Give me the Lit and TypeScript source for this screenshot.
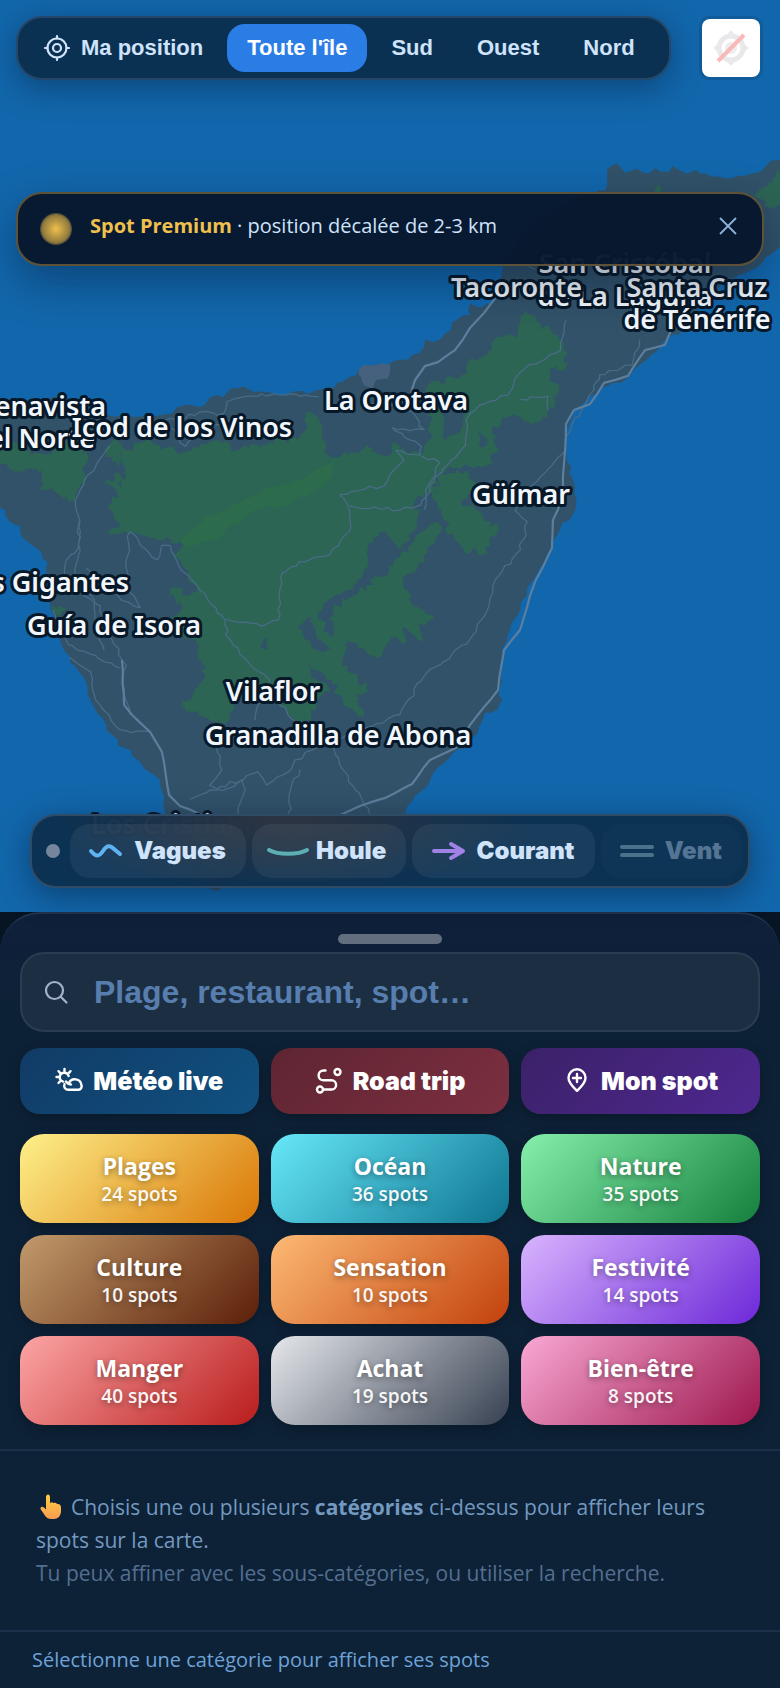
import { LitElement, html, svg, css } from "lit";
import { customElement, state } from "lit/decorators.js";
import { classMap } from "lit/directives/class-map.js";

type Pt = [number, number];

/** Turns "x,y x,y" into points. */
const pts = (s: string): Pt[] =>
  s.trim().split(/\s+/).map((p) => p.split(",").map(Number) as Pt);

/** Roughens a polyline with repeatable noise, so coasts and roads look natural. */
function rough(source: string, step: number, amount: number, closed: boolean): string {
  const p = pts(source);
  let seed = p.length * 7919 + 13;
  const rnd = () => {
    seed = (seed * 1103515245 + 12345) % 2147483648;
    return seed / 2147483648 - 0.5;
  };
  const out: string[] = [];
  const n = closed ? p.length : p.length - 1;
  for (let i = 0; i < n; i++) {
    const a = p[i];
    const b = p[(i + 1) % p.length];
    const len = Math.hypot(b[0] - a[0], b[1] - a[1]);
    const k = Math.max(1, Math.round(len / step));
    for (let j = 0; j < k; j++) {
      const t = j / k;
      const w = j === 0 ? 0.3 : 1;
      out.push(
        `${(a[0] + (b[0] - a[0]) * t + rnd() * amount * w).toFixed(1)} ${(a[1] + (b[1] - a[1]) * t + rnd() * amount * w).toFixed(1)}`
      );
    }
  }
  if (!closed) out.push(p[p.length - 1].join(" "));
  return `M${out.join("L")}${closed ? "Z" : ""}`;
}

const LAND = `800,150 780,160 766,166 761,172 751,173 729,178 711,177 701,173 682,171 673,165 669,172 656,168 649,174 637,169 624,172
 617,163 607,169 605,190 560,205 525,230 502,262 500,280 492,303 482,308 470,304 470,315 453,322 450,330 440,340 425,340 420,353 408,360
 388,364 371,366 358,370 356,375 338,383 321,390 308,394 294,392 279,395 254,392 244,387 236,389 231,388 224,397 209,397 206,405
 189,405 177,407 172,413 149,415 114,417 85,408 60,397 20,402 -20,410 -20,480 0,507 10,522 20,526 22,537 35,548 47,562 46,572
 52,580 50,603 60,640 70,657 75,667 87,687 97,713 107,730 124,748 139,762 159,780 164,797 164,830 180,860 202,880 208,888 218,891 228,886 240,872
 290,862 340,850 380,830 405,813 413,800 423,790 430,780 438,767 455,752 466,748 478,733 485,712 498,710 503,700 498,695 502,682 500,667 502,650
 507,640 510,628 520,610 527,588 537,573 547,555 562,523 575,510 575,493 570,473 566,440 572,417 580,407 597,393 607,387
 622,383 647,360 667,340 687,325 706,300 726,283 756,268 766,257 780,247 800,240`;

const FORESTS = [
  `107,445 119,442 130,450 145,440 160,450 189,450 219,440 239,450 270,442 299,440 311,412 318,417 323,433 331,457 358,452 388,442 405,450 423,453
 430,440 428,427 433,417 425,390 433,382 458,380 470,360 483,357 493,340 517,337 520,322 527,310 542,323 557,337 567,353 567,367 550,370 557,393
 547,417 532,423 512,415 493,427 498,450 488,465 458,467 438,473 433,493 415,500 418,517 413,533 403,552 383,532 373,537 368,560 358,583
 328,600 318,615 330,640 333,610 368,585 393,567 413,543 438,518 443,527 428,553 403,577 413,607 435,620 418,623 423,643 403,627 406,650
 391,637 376,658 358,643 348,640 343,660 358,680 373,690 356,693 363,717 343,700 331,680 308,663 311,677 330,692 318,700 313,720 294,720
 279,700 259,700 245,680 234,707 226,723 209,717 177,707 197,687 204,673 199,647 174,633 172,617 182,608 169,590 194,593 189,570 172,553
 184,543 154,537 130,531 102,532 119,525 110,510 117,493 104,483 119,473 112,458`,
  `438,475 465,470 478,490 462,500 480,514 498,528 490,540 485,555 463,548 450,535 445,520 433,500`,
  `-5,448 20,440 30,455 47,455 60,444 84,442 86,480 75,500 40,488 42,470 15,472 -5,462`,
  `756,195 768,182 785,168 785,198 770,208`,
  `655,188 659,184 666,192 658,196`,
  `52,607 66,608 60,618`
];

const CLEARINGS = [
  `372,452 384,432 392,404 396,430 388,456`,
  `298,626 312,616 316,634 330,648 322,652 306,640`,
  `262,640 268,638 268,648 260,648`,
  `440,410 455,396 468,402 460,432 446,440`,
  `478,432 488,440 482,448`,
  `120,452 126,470 122,488 118,468`
];

const STREAK = `180,541 205,517 240,502 262,492 300,480 335,458 330,480 290,505 262,508 235,524 210,541 190,548`;
const TOWN = `358,374 364,365 390,364 388,378 376,380 372,390 362,382`;

const HIGHWAYS = [
  `502,290 484,313 470,328 455,350 438,362 425,366 415,380 410,398 396,405 372,404`,
  `700,292 676,320 665,345 645,350 628,376 604,383 590,404 574,410 566,424 562,500 553,520 552,548 536,580 530,596 520,630 504,650 498,690 470,725 456,748 430,760 412,784 385,798 360,806 334,818`,
  `122,660 124,705 132,715 150,732 162,752 169,795 180,806 210,818`
];

const ROADS = [
  `400,405 412,412 424,430 392,428 410,440 422,446 420,455 396,450 404,460 390,475 384,486 340,494 348,506 350,530 330,555 300,562 282,573 278,620 262,626 240,622 226,619`,
  `422,456 440,462 432,480 420,505 400,510 350,506`,
  `566,320 560,350 520,372 508,395 480,405 466,420 466,445 448,465 430,486 424,510`,
  `640,340 632,365 600,375 588,400 570,430 562,455 528,490 515,510 527,522 520,550 495,580 488,610 470,640 440,665 425,675 400,715 360,730 330,742 305,752 288,772 266,785 258,772 222,790 210,785 222,770 216,745`,
  `318,397 290,394 245,396 228,402 224,414 200,412 186,418 165,420 185,446 200,430 240,418`,
  `110,446 100,458 85,480 75,500 80,520 78,548 66,560 62,580 100,606 112,640 126,665 124,690 130,715`,
  `80,520 80,550 75,575 95,600 95,620 104,650`,
  `130,532 126,560 128,585 140,608 122,600 100,580 86,568`,
  `130,532 140,545 158,560 162,545 170,545 182,570 200,590 226,620 226,635 250,664 270,680 262,700 255,720`,
  `52,610 68,645 95,655 120,668`,
  `70,658 90,672 96,700 120,730 150,732`,
  `278,700 296,722 330,732 340,765 356,790 372,820`,
  `190,800 210,790 242,780 245,790 238,815`,
  `300,770 290,790 290,820`,
  `535,270 522,262 522,245`,
  `520,400 548,396 548,410`
];

interface MapLabel { x: number; y: number; anchor: string; text: string; }
const LABELS: MapLabel[] = [
  { x: 625, y: 273, anchor: "middle", text: "San Cristóbal" },
  { x: 625, y: 306, anchor: "middle", text: "de La Laguna" },
  { x: 451, y: 297, anchor: "start", text: "Tacoronte" },
  { x: 697, y: 297, anchor: "middle", text: "Santa Cruz" },
  { x: 697, y: 329, anchor: "middle", text: "de Ténérife" },
  { x: 396, y: 410, anchor: "middle", text: "La Orotava" },
  { x: 106, y: 416, anchor: "end", text: "Buenavista" },
  { x: 95, y: 448, anchor: "end", text: "del Norte" },
  { x: 182, y: 437, anchor: "middle", text: "Icod de los Vinos" },
  { x: 521, y: 504, anchor: "middle", text: "Güímar" },
  { x: 129, y: 592, anchor: "end", text: "Los Gigantes" },
  { x: 114, y: 635, anchor: "middle", text: "Guía de Isora" },
  { x: 273, y: 701, anchor: "middle", text: "Vilaflor" },
  { x: 338, y: 745, anchor: "middle", text: "Granadilla de Abona" },
  { x: 91, y: 834, anchor: "start", text: "Los Cristianos" }
];

@customElement("island-map")
export class IslandMap extends LitElement {
  static styles = css`
    :host { display: block; }
    svg { display: block; width: 100%; height: 100%; }
    .land { fill: #315269; }
    .forest { fill: #2c6554; }
    .streak { fill: #2c6c4c; }
    .town { fill: #45617d; }
    .road { fill: none; stroke: #4a6b86; stroke-width: 1.3; stroke-linejoin: round; }
    .highway { fill: none; stroke: #5d7e9c; stroke-width: 2.2; stroke-linejoin: round; }
    .label {
      font: 600 27px "Noto Sans", "Open Sans", sans-serif;
      fill: #f1f7fc; stroke: #071828; stroke-width: 6; stroke-linejoin: round; paint-order: stroke;
    }
  `;
  render() {
    return html`<svg viewBox="0 0 780 912" preserveAspectRatio="xMidYMid slice" role="img" aria-label="Carte de Tenerife">
      <path class="land" d=${rough(LAND, 7, 5, true)} />
      ${FORESTS.map((f) => svg`<path class="forest" d=${rough(f, 4, 8, true)} />`)}
      ${CLEARINGS.map((f) => svg`<path class="land" d=${rough(f, 5, 6, true)} />`)}
      <path class="streak" d=${rough(STREAK, 7, 5, true)} />
      <path class="town" d=${rough(TOWN, 5, 3, true)} />
      ${ROADS.map((r) => svg`<path class="road" d=${rough(r, 6, 4, false)} />`)}
      ${HIGHWAYS.map((r) => svg`<path class="highway" d=${rough(r, 12, 1, false)} />`)}
      ${LABELS.map((l) => svg`<text class="label" x=${l.x} y=${l.y} text-anchor=${l.anchor}>${l.text}</text>`)}
    </svg>`;
  }
}

const ZONES = ["Toute l'île", "Sud", "Ouest", "Nord"];

const LAYERS = [
  { name: "Vagues", on: true, icon: svg`<path d="M1 12C6 18 9 18 13 12C17 6 20 6 24 10L30 15" stroke="#60b3f3"/>` },
  { name: "Houle", on: true, icon: svg`<path d="M-3 11C6 16 26 16 35 11" stroke="#5bb0b4"/>` },
  { name: "Courant", on: true, icon: svg`<path d="M1 12H29M18 5L30 12L18 19" stroke="#9f82e4"/>` },
  { name: "Vent", on: false, icon: svg`<path d="M1 8H31M1 16H31" stroke="#94bccb"/>` }
];

const TOOLS = [
  {
    name: "Météo live", tone: "weather",
    icon: svg`<path d="M9.500 2v2M1.500 10h2M3.500 4.200l1.600 1.600M15.500 4.200l-1.600 1.600M3.500 16l1.600-1.600"/>
      <path d="M8.200 14.600A4.500 4.500 0 1 1 13.600 9"/>
      <path d="M13 22.800a4 4 0 0 1-3.400-5.800M13 22.800h10.500a3.500 3.500 0 0 0 3-4.500a6.600 6.600 0 0 0-12.700-1.800"/>
      <path d="M11 14.500a6.800 6.800 0 0 0 5 3"/>`
  },
  { name: "Road trip", tone: "road-trip", icon: svg`<circle cx="5" cy="22.500" r="3"/><circle cx="22.500" cy="5" r="3"/><path d="M8 22.500h8.500a4.600 4.600 0 0 0 0-9.200H8.500a4.600 4.600 0 0 1 0-9.800h2"/>` },
  { name: "Mon spot", tone: "my-spot", icon: svg`<path d="M22.500 10.800c0 5.500-5.500 10-8.500 13c-3-3-8.500-7.500-8.500-13a8.500 8.500 0 0 1 17 0ZM14 7v8M10 11h8"/>` }
];

const CATEGORIES = [
  { name: "Plages", spots: 24, tone: "beach" },
  { name: "Océan", spots: 36, tone: "ocean" },
  { name: "Nature", spots: 35, tone: "nature" },
  { name: "Culture", spots: 10, tone: "culture" },
  { name: "Sensation", spots: 10, tone: "thrill" },
  { name: "Festivité", spots: 14, tone: "party" },
  { name: "Manger", spots: 40, tone: "food" },
  { name: "Achat", spots: 19, tone: "shop" },
  { name: "Bien-être", spots: 8, tone: "care" }
];

@customElement("app-root")
export class AppRoot extends LitElement {
  @state() private zone = "Toute l'île";
  @state() private notice = true;

  static styles = css`
    :host {
      display: flex; flex-direction: column; min-height: 100vh;
      background: #061424; color: #cfe3fb;
      font-family: "Open Sans", "Noto Sans", sans-serif;
    }
    * { box-sizing: border-box; }
    button { font: inherit; color: inherit; border: 0; background: none; margin: 0; padding: 0; cursor: pointer; }
    svg { display: block; flex: none; overflow: visible; }

    .map-area { position: relative; flex: 1 0 auto; min-height: 600px; display: flex; flex-direction: column; background: #1267ac; }
    island-map { position: absolute; inset: 0; }
    .overlay { position: relative; flex: 1; display: flex; flex-direction: column; padding: 16px 16px 24px; }
    .top { display: flex; align-items: center; justify-content: space-between; padding-right: 4px; }
    .zones {
      display: flex; gap: 4px; padding: 6px 14px 6px 6px; border: 2px solid #25486a; border-radius: 26px;
      background: #0b3152; box-shadow: 0 8px 32px rgba(4, 20, 44, 0.4);
      font: 700 22px/48px "Liberation Sans", Arial, sans-serif;
    }
    .zone { display: flex; align-items: center; gap: 11px; height: 48px; padding: 0 20px; border-radius: 18px; white-space: nowrap; }
    .zone.active { background: #2b7de6; color: #fff; }
    .locate {
      display: grid; place-items: center; width: 58px; height: 58px; border-radius: 8px; background: #fff;
      box-shadow: 0 0 0 3px rgba(0, 0, 0, 0.1);
    }
    .notice {
      display: flex; align-items: center; gap: 18px; margin-top: 112px; height: 74px; padding: 0 24px 0 22px;
      border: 2px solid #5d5137; border-radius: 26px; background: rgba(7, 24, 45, 0.97);
      box-shadow: 0 16px 44px rgba(4, 20, 44, 0.4); font-size: 20px; line-height: 30px;
    }
    .notice p { flex: 1; margin: 0; padding-bottom: 6px; }
    .notice strong { color: #efc04d; font-weight: 700; }
    .glow { width: 32px; height: 32px; border-radius: 50%; background: radial-gradient(circle, #efc04d 0%, #8f7a3d 60%, #3f4038 72%); }
    .close { padding: 4px 2px 10px; color: #8db2d9; }
    .layers {
      display: flex; align-items: center; gap: 6px; margin: auto 14px 0; height: 74px; padding: 0 6px 0 14px;
      border: 2px solid #2f4b65; border-radius: 26px;
      background: radial-gradient(ellipse 34% 110% at 36% 0, #2e3441, rgba(46, 52, 65, 0)), rgba(11, 48, 80, 0.97);
      box-shadow: 0 8px 32px rgba(4, 20, 44, 0.45);
      font: 900 24px/54px Inter, "Liberation Sans", sans-serif;
    }
    .dot { width: 14px; height: 14px; margin-right: 4px; border-radius: 50%; background: #74859c; }
    .layer { flex: 1 1 auto; display: flex; align-items: center; justify-content: center; gap: 12px; height: 54px; border-radius: 20px; background: rgba(255, 255, 255, 0.06); }
    .layer.off { background: rgba(255, 255, 255, 0.02); color: #557595; }
    .layer.off svg { opacity: 0.45; }
    .layer svg { fill: none; stroke-width: 4; stroke-linecap: round; stroke-linejoin: round; }

    .sheet {
      display: flex; flex-direction: column; border-top: 2px solid #20344d; border-radius: 40px 40px 0 0;
      background: linear-gradient(#0f203b, #0d2136 12%, #0d2137);
    }
    .handle { align-self: center; width: 104px; height: 10px; margin: 20px 0 8px; border-radius: 5px; background: #626d7d; }
    .panel { display: flex; flex-direction: column; padding: 0 20px 24px; }
    .search {
      display: flex; align-items: center; gap: 26px; height: 80px; padding: 0 22px; color: #a4b4c8;
      border: 2px solid #2a3c51; border-radius: 24px; background: #1c2f42;
    }
    .search input {
      flex: 1; min-width: 0; padding: 0; border: 0; outline: 0; background: none; color: #dbe8f8;
      font: 700 32px/44px "Liberation Sans", Arial, sans-serif;
    }
    .search input::placeholder { color: #577eaf; opacity: 1; }
    .tools, .categories { display: grid; grid-template-columns: repeat(3, 1fr); gap: 12px; }
    .tools { margin: 16px 0 20px; font: 900 25px/66px Inter, "Liberation Sans", sans-serif; color: #fff; }
    .tool { display: flex; align-items: center; justify-content: center; gap: 10px; height: 66px; border-radius: 20px; box-shadow: 0 4px 12px rgba(0, 0, 0, 0.25); }
    .tool svg { fill: none; stroke: currentColor; stroke-width: 2.4; stroke-linecap: round; stroke-linejoin: round; }
    .weather { background: linear-gradient(135deg, #113b66, #105180); }
    .road-trip { background: linear-gradient(135deg, #5f2532, #7c2f40); }
    .my-spot { background: linear-gradient(135deg, #3b2168, #4e2890); }
    .category {
      display: flex; flex-direction: column; align-items: center; justify-content: center; height: 89px; border-radius: 24px;
      color: #fff; text-shadow: 0 2px 6px rgba(0, 0, 0, 0.4); box-shadow: 0 4px 12px rgba(0, 0, 0, 0.25);
    }
    .name { font-size: 23px; line-height: 30px; font-weight: 700; }
    .count { font-size: 19px; line-height: 26px; font-weight: 600; opacity: 0.93; }
    .beach { background: linear-gradient(135deg, #fef08a, #d97706); }
    .ocean { background: linear-gradient(135deg, #67e8f9, #0e7490); }
    .nature { background: linear-gradient(135deg, #86efac, #15803d); }
    .culture { background: linear-gradient(135deg, #c19a6b, #5c1f09); }
    .thrill { background: linear-gradient(135deg, #fdba74, #c2410c); }
    .party { background: linear-gradient(135deg, #d8b4fe, #6d28d9); }
    .food { background: linear-gradient(135deg, #fca5a5, #b91c1c); }
    .shop { background: linear-gradient(135deg, #e5e7eb, #374151); }
    .care { background: linear-gradient(135deg, #f9a8d4, #9d174d); }
    .hint {
      padding: 40px 36px; border-top: 2px solid #1d3049; border-bottom: 2px solid #1d3049;
      font-size: 21px; line-height: 33px; color: #7399c0;
    }
    .hint p { margin: 0; }
    .hint .more { color: #536f90; }
    .hint svg { display: inline-block; vertical-align: -4px; margin: 0 8px 0 3px; }
    .status { margin: 0; padding: 12px 32px; font-size: 20px; line-height: 32px; color: #6ea3d8; }
  `;

  render() {
    return html`
      <section class="map-area">
        <island-map></island-map>
        <div class="overlay">
          <div class="top">
            <nav class="zones">
              <button class="zone">
                <svg width="26" height="26" viewBox="0 0 26 26" fill="none" stroke="currentColor" stroke-width="2.200" stroke-linecap="round">
                  <circle cx="13" cy="13" r="9.500" /><circle cx="13" cy="13" r="4" />
                  <path d="M13 1v2.500M13 22.500V25M1 13h2.500M22.500 13H25" />
                </svg>
                Ma position
              </button>
              ${ZONES.map((z) => html`<button class=${classMap({ zone: true, active: z === this.zone })} @click=${() => (this.zone = z)}>${z}</button>`)}
            </nav>
            <button class="locate" aria-label="Localisation indisponible">
              <svg width="36" height="36" viewBox="0 0 36 36">
                <circle cx="18" cy="18" r="12" fill="none" stroke="#e9e9eb" stroke-width="5" />
                <circle cx="18" cy="18" r="6" fill="#ededef" />
                <path d="M18 0l4 5h-8ZM18 36l4-5h-8ZM0 18l5-4v8ZM36 18l-5-4v8Z" fill="#e9e9eb" />
                <path d="M5 31L31 5" stroke="#fab9b9" stroke-width="4" />
              </svg>
            </button>
          </div>
          ${this.notice
            ? html`<div class="notice" role="status">
                <span class="glow"></span>
                <p><strong>Spot Premium</strong> · position décalée de 2-3 km</p>
                <button class="close" aria-label="Fermer" @click=${() => (this.notice = false)}>
                  <svg width="16" height="16" viewBox="0 0 16 16" stroke="currentColor" stroke-width="1.800"><path d="M0 0L16 16M16 0L0 16" /></svg>
                </button>
              </div>`
            : ""}
          <div class="layers">
            <span class="dot"></span>
            ${LAYERS.map((l) => html`<button class=${classMap({ layer: true, off: !l.on })}>
              <svg width="32" height="24" viewBox="0 0 32 24">${l.icon}</svg>${l.name}
            </button>`)}
          </div>
        </div>
      </section>

      <main class="sheet">
        <span class="handle"></span>
        <div class="panel">
          <label class="search">
            <svg width="24" height="24" viewBox="0 0 24 24" fill="none" stroke="currentColor" stroke-width="2.200" stroke-linecap="round">
              <circle cx="10.500" cy="10.500" r="8.500" /><path d="M17 17L22.500 22.500" />
            </svg>
            <input type="text" placeholder="Plage, restaurant, spot…" aria-label="Rechercher" />
          </label>
          <div class="tools">
            ${TOOLS.map((t) => html`<button class="tool ${t.tone}"><svg width="28" height="28" viewBox="0 0 28 28">${t.icon}</svg>${t.name}</button>`)}
          </div>
          <div class="categories">
            ${CATEGORIES.map((c) => html`<button class="category ${c.tone}">
              <span class="name">${c.name}</span><span class="count">${c.spots} spots</span>
            </button>`)}
          </div>
        </div>
        <div class="hint">
          <p>
            <svg width="24" height="24" viewBox="0 0 24 24">
              <defs><linearGradient id="skin" x1="0" y1="0" x2="0" y2="1"><stop offset="0" stop-color="#ffd13f" /><stop offset="1" stop-color="#f89b52" /></linearGradient></defs>
              <path fill="url(#skin)" d="M7 2C7-1.500 11-1.500 11 2V8Q13 6.500 14.500 8Q17 7 18 9Q21.500 8.500 22 12V17Q21 24 15 24H12C7 24 6 20 2.500 15.500C0 12.500 3 10.500 5 12.500L7 14.500Z" />
            </svg>Choisis une ou plusieurs <strong>catégories</strong> ci-dessus pour afficher leurs spots sur la carte.
          </p>
          <p class="more">Tu peux affiner avec les sous-catégories, ou utiliser la recherche.</p>
        </div>
        <p class="status">Sélectionne une catégorie pour afficher ses spots</p>
      </main>
    `;
  }
}
